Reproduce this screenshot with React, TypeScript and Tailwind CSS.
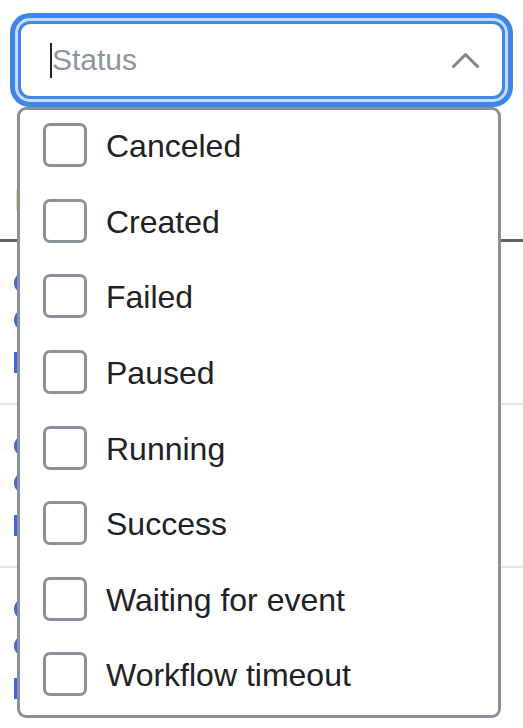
import React from "react";

const STATUSES = [
  "Canceled",
  "Created",
  "Failed",
  "Paused",
  "Running",
  "Success",
  "Waiting for event",
  "Workflow timeout",
];

function ChevronUp() {
  return (
    <svg width="27" height="16" viewBox="0 0 27 16" fill="none">
      <polyline
        points="1.5,14.5 13.5,2.5 25.5,14.5"
        stroke="#80868b"
        strokeWidth="3"
        strokeLinecap="round"
        strokeLinejoin="round"
      />
    </svg>
  );
}

function BackgroundRow() {
  return (
    <div className="h-[163px] border-b-2 border-[#e3e6ea] pl-[14px] pt-[30px] flex flex-col">
      <div className="w-[22px] h-[22px] rounded-full bg-[#3c67e3]" />
      <div className="w-[22px] h-[22px] rounded-full bg-[#3c67e3] mt-[15px]" />
      <div className="w-[3px] h-[21px] bg-[#3c67e3] mt-[21px]" />
    </div>
  );
}

export default function App() {
  return (
    <div
      className="relative w-[523px] h-[728px] overflow-hidden bg-white"
      style={{ fontFamily: '"Liberation Sans", Arial, sans-serif' }}
    >
      {/* Filter input (focused) */}
      <div className="pt-[21px] pl-[18px]">
        <div className="w-[487px] h-[78px] rounded-[12px] border-[3px] border-[#3f87e4] bg-white shadow-[0_0_0_3px_#c6dcfa,0_0_0_8px_#3f87e4] flex items-center pl-[29px] pr-[23px]">
          <span className="w-[2px] h-[35px] bg-[#202124]" />
          <span className="flex-1 text-[30px] leading-none text-[#8c949c]">Status</span>
          <ChevronUp />
        </div>
      </div>

      {/* Table underneath */}
      <div className="mt-[61px] h-[82px] border-b-[3px] border-[#5f6368] flex items-center pl-[14px]">
        <span className="text-[32px] leading-none text-[#202124]">ID</span>
      </div>
      <BackgroundRow />
      <BackgroundRow />
      <BackgroundRow />

      {/* Dropdown menu */}
      <div className="absolute left-[17px] top-[107px] w-[484px] h-[611px] rounded-[9px] border-[3px] border-[#8a9199] bg-white flex flex-col">
        {STATUSES.map((s) => (
          <div key={s} className="h-[75.6px] shrink-0 flex items-center pl-[23px] pb-[3px]">
            <span className="w-[44px] h-[44px] rounded-[7px] border-[3px] border-[#8a9199] bg-white mb-[2px]" />
            <span className="ml-[19px] text-[32px] leading-none text-[#202124]">{s}</span>
          </div>
        ))}
      </div>
    </div>
  );
}
